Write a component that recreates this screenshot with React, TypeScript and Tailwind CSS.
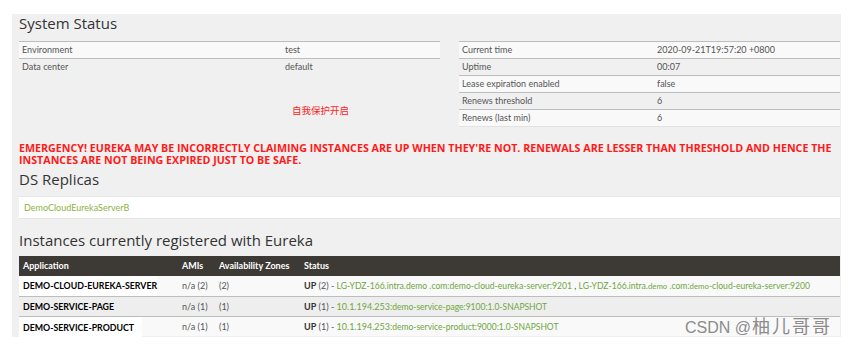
const leftRows = [
  ['Environment', 'test'],
  ['Data center', 'default'],
];

const rightRows = [
  ['Current time', '2020-09-21T19:57:20 +0800'],
  ['Uptime', '00:07'],
  ['Lease expiration enabled', 'false'],
  ['Renews threshold', '6'],
  ['Renews (last min)', '6'],
];

function InfoTable({ rows, labelWidth, width, bottom }: { rows: string[][]; labelWidth: string; width: string; bottom?: boolean }) {
  return (
    <div className={`${width} ${bottom ? 'border-b border-[#e2e2e2]' : ''}`}>
      {rows.map((row, i) => (
        <div
          key={i}
          className={`flex h-[17px] items-center border-t border-[#bdbdbd] text-[9px] text-[#555] ${
            i % 2 === 0 ? 'bg-[#f9f9f9]' : 'bg-[#f0f0f0]'
          }`}
        >
          <div className={`${labelWidth} pl-[3px]`}>{row[0]}</div>
          <div>{row[1]}</div>
        </div>
      ))}
    </div>
  );
}

const green = 'text-[#6fa63f]';

export default function App() {
  return (
    <div className="relative h-[345px] w-[853px] overflow-hidden bg-white pl-[12px] pt-[14px] font-['Lato','Noto_Sans_CJK_SC',sans-serif]">
      <div className="h-[323px] w-[829px] bg-[#f0f0f0] pl-[7px] pr-px">
        <h2 className="font-['Open_Sans',sans-serif] text-[15px] font-medium leading-[18px] text-[#333]">System Status</h2>

        <div className="mt-[9px] flex gap-[19px]">
          <div className="w-[421px]">
            <InfoTable rows={leftRows} labelWidth="w-[266px]" width="w-[421px]" />
            <div className="mt-[29px] pl-[273px] text-[9.5px] text-[#ff2020]">自我保护开启</div>
          </div>
          <InfoTable rows={rightRows} labelWidth="w-[198px]" width="w-[381px]" bottom />
        </div>

        <div className="mt-[15px] font-['Open_Sans',sans-serif] text-[10.7px] font-bold leading-[12px] whitespace-nowrap text-[#ff1a1a]">
          EMERGENCY! EUREKA MAY BE INCORRECTLY CLAIMING INSTANCES ARE UP WHEN THEY'RE NOT. RENEWALS ARE LESSER THAN THRESHOLD AND HENCE THE
          <br />
          INSTANCES ARE NOT BEING EXPIRED JUST TO BE SAFE.
        </div>

        <h2 className="mt-[4px] font-['Open_Sans',sans-serif] text-[15px] font-medium leading-[18px] text-[#333]">DS Replicas</h2>
        <div className="mt-[8px] flex h-[23px] items-center border-y border-[#e6e6e6] bg-white pl-[5px] text-[9px] text-[#8cb33f]">
          DemoCloudEurekaServerB
        </div>

        <h2 className="mt-[12px] font-['Open_Sans',sans-serif] text-[15px] font-medium leading-[18px] text-[#333]">
          Instances currently registered with Eureka
        </h2>

        <div className="mt-[7px] text-[9px] whitespace-nowrap">
          <div className="flex h-[20px] items-center bg-[#3d3a35] font-bold text-white">
            <div className="w-[159px] shrink-0 pl-[4px]">Application</div>
            <div className="w-[37px] shrink-0 pl-[4px]">AMIs</div>
            <div className="w-[85px] shrink-0 pl-[4px]">Availability Zones</div>
            <div className="pl-[4px]">Status</div>
          </div>

          <div className="flex h-[20px] items-center bg-[#f9f9f9] text-[#555]">
            <div className="flex h-full w-[159px] shrink-0 items-center">
              <span className="flex h-full w-[138px] items-center bg-white pl-[4px] text-[8.8px] font-bold text-black">
                DEMO-CLOUD-EUREKA-SERVER
              </span>
            </div>
            <div className="w-[37px] shrink-0 pl-[4px]">n/a (2)</div>
            <div className="w-[85px] shrink-0 pl-[4px]">(2)</div>
            <div className="pl-[4px]">
              <b className="text-[#333]">UP</b> (2) -{' '}
              <span className={`${green} text-[8.6px]`}>LG-YDZ-166.intra.demo .com:demo-cloud-eureka-server:9201</span> ,{' '}
              <span className={`${green} text-[8.6px]`}>
                LG-YDZ-166.intra.<span className="text-[7.8px]">demo</span> .com:<span className="text-[7.8px]">demo</span>
                -cloud-eureka-server:9200
              </span>
            </div>
          </div>

          <div className="flex h-[20px] items-center border-t border-[#bdbdbd] bg-[#eeeeee] text-[#555]">
            <div className="w-[159px] shrink-0 pl-[4px] text-[8.8px] font-bold text-black">DEMO-SERVICE-PAGE</div>
            <div className="w-[37px] shrink-0 pl-[4px]">n/a (1)</div>
            <div className="w-[85px] shrink-0 pl-[4px]">(1)</div>
            <div className="pl-[4px]">
              <b className="text-[#333]">UP</b> (1) -{' '}
              <span className={green}>
                10.1.194.253:<span className="text-[8.5px]">demo-service-page:9100:1.0-SNAPSHOT</span>
              </span>
            </div>
          </div>

          <div className="flex h-[20px] items-center border-t border-[#bdbdbd] bg-[#f9f9f9] text-[#555]">
            <div className="flex h-full w-[159px] shrink-0 items-center">
              <span className="flex h-[21px] w-[123px] items-center self-start bg-white pl-[4px] text-[8.8px] font-bold text-black">
                DEMO-SERVICE-PRODUCT
              </span>
            </div>
            <div className="w-[37px] shrink-0 pl-[4px]">n/a (1)</div>
            <div className="w-[85px] shrink-0 pl-[4px]">(1)</div>
            <div className="pl-[4px]">
              <b className="text-[#333]">UP</b> (1) -{' '}
              <span className={green}>
                10.1.194.253:<span className="text-[8.5px]">demo-service-product:9000:1.0-SNAPSHOT</span>
              </span>
            </div>
          </div>
        </div>
      </div>

      <div className="absolute left-[685px] top-[316px] flex items-baseline whitespace-nowrap font-['Liberation_Sans','Noto_Sans_CJK_SC',sans-serif] leading-[22px] text-[#8c8c8c]">
        <span className="text-[16px]">CSDN @</span>
        <span className="ml-[1px] text-[18px] tracking-[2px]">柚儿哥哥</span>
      </div>
    </div>
  );
}
